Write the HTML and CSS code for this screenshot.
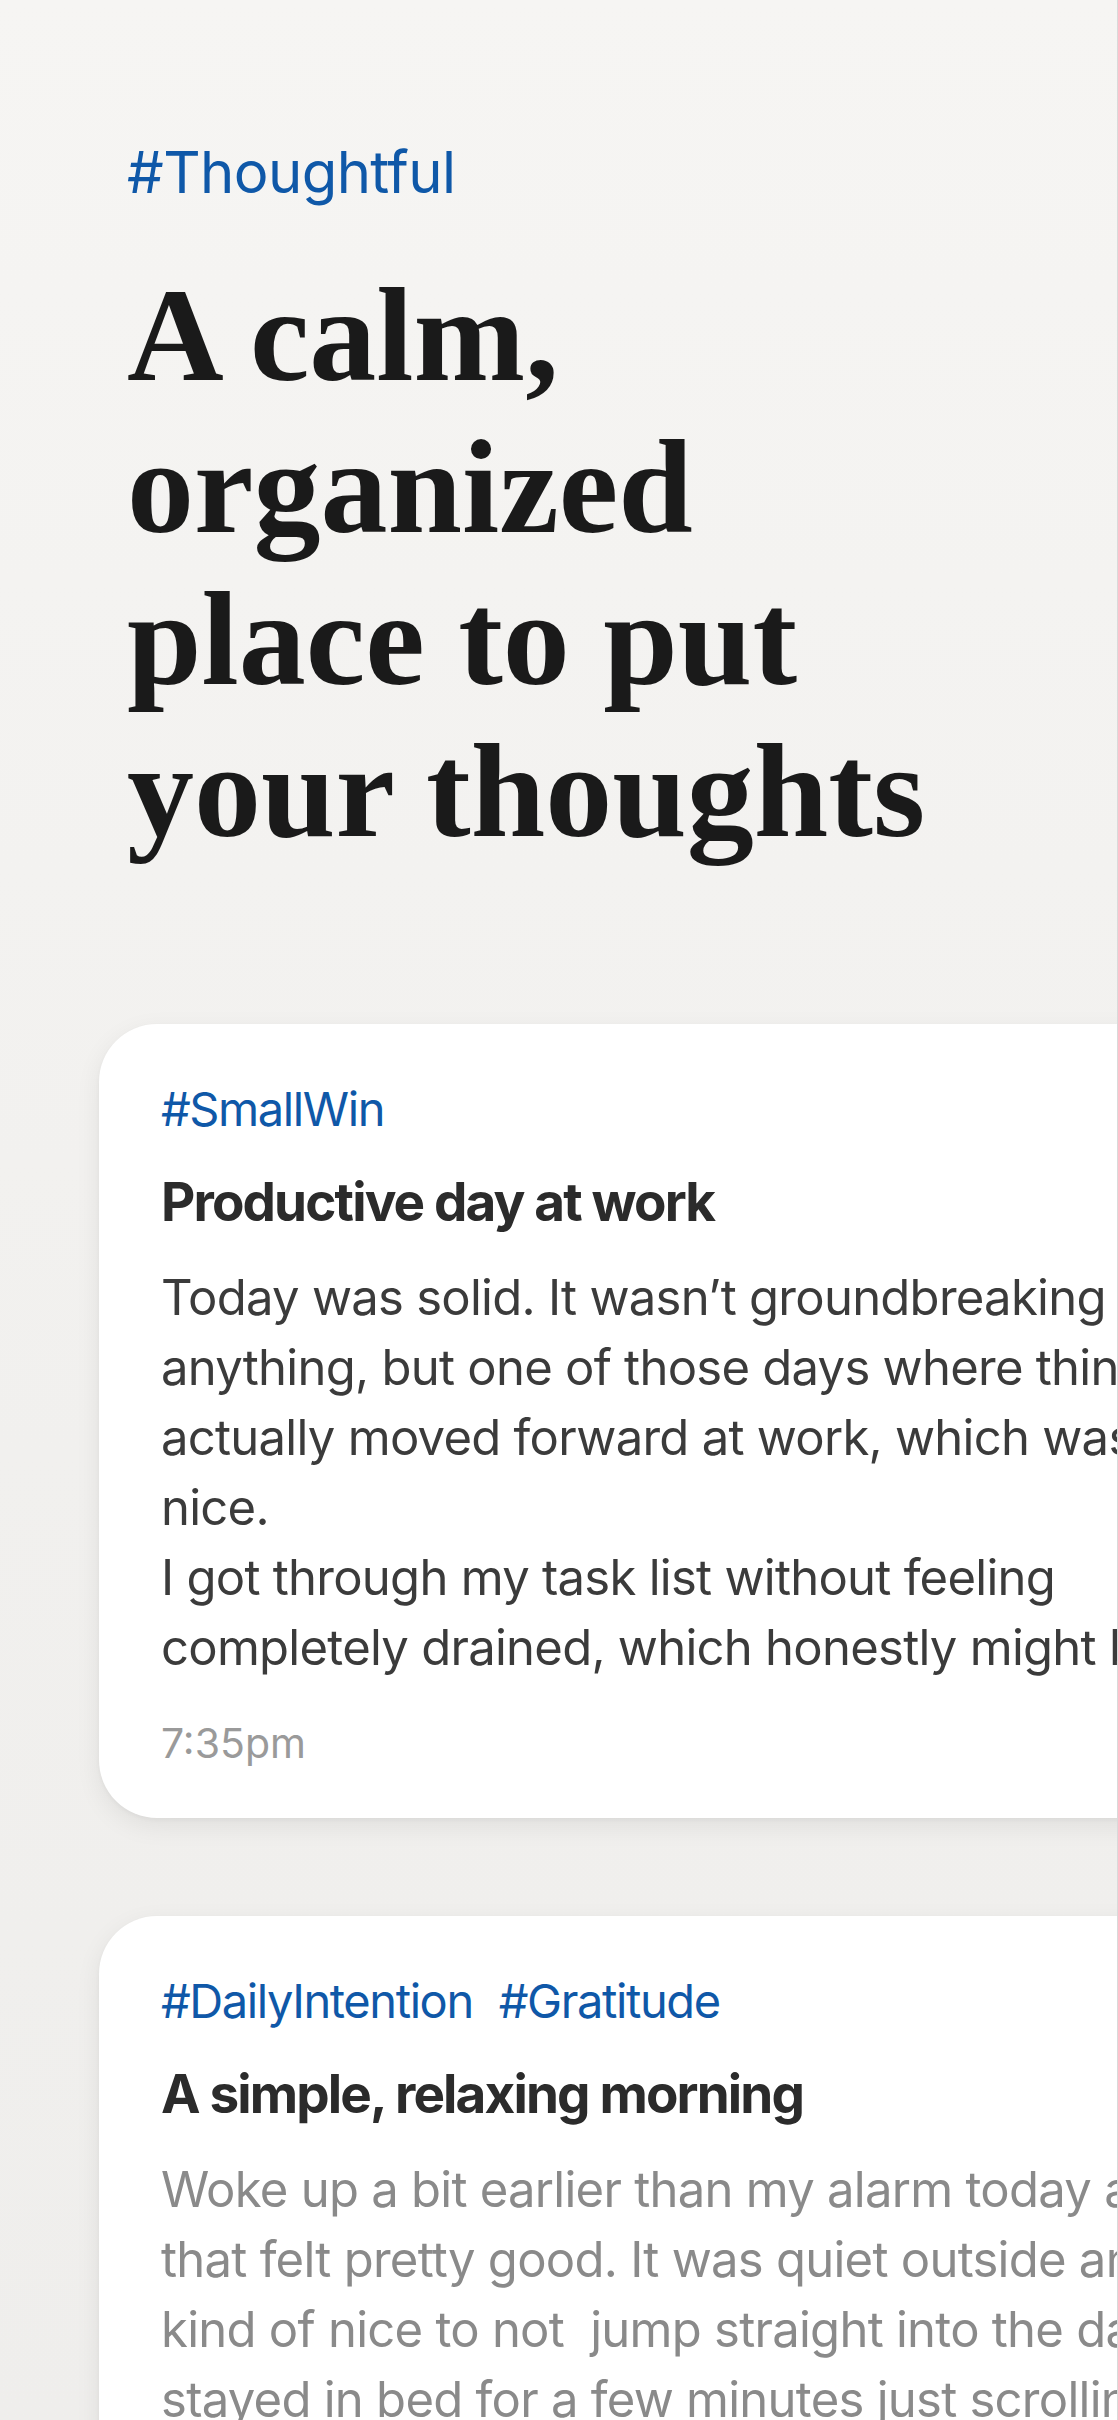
FILE: index.html
```html
<!DOCTYPE html>
<html lang="en">
<head>
<meta charset="utf-8">
<title>Thoughtful</title>
<link rel="stylesheet" href="styles.css">
</head>
<body>
<div class="screen">
  <header class="hero">
    <div class="hero-tag">#Thoughtful</div>
    <h1 class="headline">A calm,<br>organized<br>place to put<br>your thoughts</h1>
  </header>
  <main class="feed">
    <article class="card">
      <div class="tags"><span class="tag">#SmallWin</span></div>
      <h2 class="card-title">Productive day at work</h2>
      <p class="card-body">Today was solid. It wasn’t groundbreaking or<br>anything, but one of those days where things<br>actually moved forward at work, which was<br>nice.<br>I got through my task list without feeling<br>completely drained, which honestly might be</p>
      <div class="card-time">7:35pm</div>
    </article>
    <article class="card card-muted">
      <div class="tags"><span class="tag">#DailyIntention</span><span class="tag">#Gratitude</span></div>
      <h2 class="card-title">A simple, relaxing morning</h2>
      <p class="card-body">Woke up a bit earlier than my alarm today and<br>that felt pretty good. It was quiet outside and<br>kind of nice to not&nbsp; jump straight into the day. I<br>stayed in bed for a few minutes just scrolling</p>
    </article>
  </main>
</div>
</body>
</html>
```
FILE: styles.css
```css
html, body {
  margin: 0;
  padding: 0;
}
body {
  background: linear-gradient(180deg, #f6f5f3 0%, #f1f0ee 60%, #efeeec 100%);
  font-family: Inter, "Noto Sans", sans-serif;
  width: 1118px;
  height: 2420px;
  overflow: hidden;
}
.screen {
  width: 1117px;
  height: 2420px;
  border-right: 1px solid #d9d9d9;
  overflow: hidden;
}
.hero {
  padding: 137px 0 0 127px;
}
.hero-tag {
  font-size: 58px;
  line-height: 70px;
  color: #0f58a8;
  letter-spacing: -0.01em;
}
.headline {
  margin: 52px 0 0;
  font-family: "Liberation Serif", "Times New Roman", serif;
  font-weight: 700;
  font-size: 134px;
  line-height: 152px;
  color: #1a1a1a;
  letter-spacing: 0;
}
.feed {
  margin-top: 157px;
  padding-left: 99px;
  display: flex;
  flex-direction: column;
  gap: 98px;
}
.card {
  width: 1100px;
  box-sizing: border-box;
  background: #ffffff;
  border-radius: 58px 0 0 58px;
  padding: 57px 0 51px 62px;
  box-shadow: 0 8px 26px rgba(0, 0, 0, 0.07), 0 2px 4px rgba(0, 0, 0, 0.04);
}
.tags {
  display: flex;
  gap: 26px;
  font-size: 47px;
  line-height: 56px;
  color: #0f58a8;
  letter-spacing: -0.03em;
  white-space: nowrap;
}
.card-title {
  margin: 33px 0 0;
  font-size: 53px;
  line-height: 64px;
  font-weight: 700;
  color: #2b2b2b;
  letter-spacing: -0.035em;
  white-space: nowrap;
}
.card-body {
  margin: 29px 0 0;
  font-size: 49px;
  line-height: 70px;
  color: #3b3b3b;
  letter-spacing: -0.015em;
  white-space: nowrap;
}
.card-time {
  margin-top: 36px;
  font-size: 41px;
  line-height: 48px;
  color: #9a9a9a;
  letter-spacing: 0;
}
.card-muted .card-body {
  color: #8a8a8a;
}
```
